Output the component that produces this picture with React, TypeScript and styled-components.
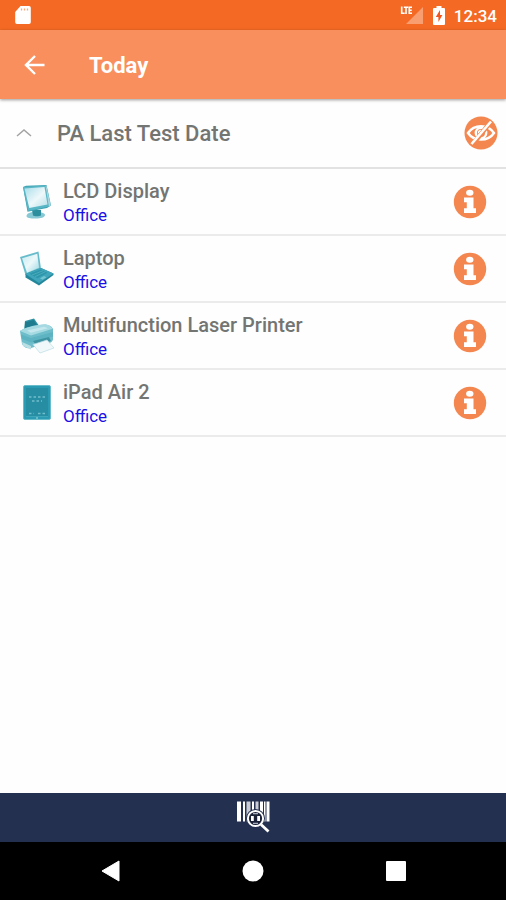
import React from "react";
import styled, { createGlobalStyle } from "styled-components";

const GlobalStyle = createGlobalStyle`
  *, *::before, *::after { box-sizing: border-box; }
  html, body { margin: 0; padding: 0; background: #fff; }
  body { font-family: Roboto, "Liberation Sans", sans-serif; }
  svg { display: block; flex: none; }
`;

const Screen = styled.div`
  display: flex;
  flex-direction: column;
  min-height: 100vh;
  background: #fefefe;
`;

const StatusBar = styled.div`
  display: flex;
  align-items: center;
  justify-content: space-between;
  height: 30px;
  padding: 0 9px 0 14px;
  background: #f46a24;
  color: #fff;
`;

const StatusGroup = styled.div`
  display: flex;
  align-items: center;
  gap: 9px;
`;

const Clock = styled.time`
  font-size: 17px;
  line-height: 20px;
  font-weight: 500;
  padding-top: 2px;
`;

const AppBar = styled.header`
  display: flex;
  align-items: center;
  gap: 31px;
  height: 69px;
  padding: 0 12px;
  background: #f88f5d;
  color: #fff;
  box-shadow: 0 1px 3px rgba(0, 0, 0, 0.4);
  z-index: 1;
`;

const IconButton = styled.button<{ $size: number }>`
  display: flex;
  align-items: center;
  justify-content: center;
  flex: none;
  width: ${(p) => p.$size}px;
  height: ${(p) => p.$size}px;
  padding: 0;
  border: 0;
  background: transparent;
  color: inherit;
  cursor: pointer;
`;

const Title = styled.h1`
  margin: 0;
  padding-top: 2px;
  font-size: 22px;
  line-height: 28px;
  font-weight: 700;
`;

const GroupHeader = styled.div`
  display: flex;
  align-items: center;
  justify-content: space-between;
  height: 70px;
  padding: 0 8px;
  border-bottom: 2px solid #e2e2e2;
`;

const GroupToggle = styled.button`
  display: flex;
  align-items: center;
  gap: 25px;
  padding: 2px 0 0 8px;
  border: 0;
  background: transparent;
  color: #737573;
  font-family: inherit;
  font-size: 22px;
  line-height: 28px;
  font-weight: 500;
  cursor: pointer;
`;

const List = styled.ul`
  flex: 1;
  margin: 0;
  padding: 0;
  list-style: none;
`;

const Row = styled.li`
  display: flex;
  align-items: center;
  gap: 8px;
  height: 67px;
  padding: 0 19px;
  border-bottom: 2px solid #ebebeb;
`;

const RowText = styled.div`
  flex: 1;
  min-width: 0;
  padding-top: 2px;
`;

const Name = styled.div`
  color: #737573;
  font-size: 20px;
  line-height: 24px;
  font-weight: 500;
`;

const Location = styled.a`
  display: block;
  color: #1a0fe6;
  font-size: 17px;
  line-height: 24px;
  text-decoration: none;
`;

const ScanBar = styled.div`
  display: flex;
  align-items: center;
  justify-content: center;
  height: 49px;
  background: #24304f;
`;

const NavBar = styled.nav`
  display: flex;
  align-items: center;
  justify-content: center;
  gap: 111px;
  height: 58px;
  background: #000;
  color: #fff;
`;

const SdCardIcon = () => (
  <svg width="18" height="20" viewBox="0 0 18 20" aria-hidden="true">
    <path d="M6.500 1H15a1.800 1.800 0 0 1 1.800 1.800v14.400A1.800 1.800 0 0 1 15 19H3a1.800 1.800 0 0 1-1.800-1.800V7z" fill="#fff" />
    <path d="M7.500 3.500v2M10.500 3.500v2M13.500 3.500v2" stroke="#f9a77c" strokeWidth="1.300" />
  </svg>
);

const SignalIcon = () => (
  <svg width="24" height="20" viewBox="0 0 24 20" role="img" aria-label="LTE signal">
    <path d="M23 2v17H6z" fill="#fff" opacity="0.350" />
    <g fill="none" stroke="#fff" strokeWidth="1.600">
      <path d="M1.700 1.500v6.800h3M3.800 2.200h4.400M6 2.200v6.700M12 2.200H9.300v6h2.700M9.300 5.200h2.400" />
    </g>
  </svg>
);

const BatteryIcon = () => (
  <svg width="12" height="19" viewBox="0 0 12 19" role="img" aria-label="Charging">
    <path d="M3.500 0h5v2H11a1 1 0 0 1 1 1v15a1 1 0 0 1-1 1H1a1 1 0 0 1-1-1V3a1 1 0 0 1 1-1h2.500z" fill="#fff" />
    <path d="M7 4 2.800 11H5.400v5L9.400 9H7z" fill="#f0561e" />
  </svg>
);

const ArrowIcon = () => (
  <svg width="22" height="22" viewBox="0 0 22 22" aria-hidden="true">
    <path d="M20.500 11H2M11 2 2 11l9 9" fill="none" stroke="#fff" strokeWidth="2.400" />
  </svg>
);

const ChevronIcon = () => (
  <svg width="16" height="10" viewBox="0 0 16 10" aria-hidden="true">
    <path d="M1 7 8 1 15 7" fill="none" stroke="#a3a3a3" strokeWidth="1.500" />
  </svg>
);

const HiddenIcon = () => (
  <svg width="34" height="34" viewBox="0 0 34 34" aria-hidden="true">
    <circle cx="17" cy="17" r="16.500" fill="#f4874f" />
    <g fill="none" stroke="#fff" strokeWidth="2.400">
      <path d="M4 17c3-4.400 7.600-6.800 13-6.800S27 12.600 30 17c-3 4.400-7.600 6.600-13 6.600S7 21.400 4 17z" />
      <circle cx="17" cy="17" r="5.200" />
      <path d="M14.500 17.500a2.800 2.800 0 0 1 2.500-3" strokeWidth="1.300" />
    </g>
    <path d="M9 28 27.500 5" stroke="#f4874f" strokeWidth="4.500" />
    <path d="M7.500 28 27 5.500" stroke="#fff" strokeWidth="2.600" />
  </svg>
);

const InfoIcon = () => (
  <svg width="34" height="34" viewBox="0 0 34 34" aria-hidden="true">
    <circle cx="17" cy="17" r="16.200" fill="#f4874f" />
    <ellipse cx="16.800" cy="7.700" rx="3.700" ry="3" fill="#fff" />
    <path d="M11 12.500h9.500v10.800h2.500V28H11v-4.700h2.800v-6H11z" fill="#fff" />
  </svg>
);

const DisplayIcon = () => (
  <svg width="36" height="38" viewBox="0 0 36 38" aria-hidden="true">
    <defs>
      <linearGradient id="displayGlass" x1="0" y1="0" x2="1" y2="1">
        <stop offset="0" stopColor="#a8deea" />
        <stop offset="0.550" stopColor="#eef8fa" />
        <stop offset="1" stopColor="#b5dfe8" />
      </linearGradient>
    </defs>
    <path d="M7.500 33c0-2.500 4-4.300 9-4.300 5.500 0 9.500 1.300 9.500 3.300 0 2.400-4.500 3.500-9.500 3.500s-9-.5-9-2.500z" fill="#86c8d3" />
    <path d="M13 27h9v5.500c-2 1-6.500 1-8 0z" fill="#2d8e9e" />
    <path d="m4 4 3-1.200L27.500 2l4.500 20.500-4 2.600-19.500 3.700z" fill="#3ea3b3" />
    <path d="m4 4 22.500-1.400 3.300 21L9 28z" fill="#58b6c5" />
    <path d="m5.500 5.500 20-1.500 3 17.500L10.300 25z" fill="url(#displayGlass)" />
    <path d="m27.300 2.500 4.500 20-2 1.200-3.300-21z" fill="#a9d7df" />
  </svg>
);

const LaptopIcon = () => (
  <svg width="36" height="38" viewBox="0 0 36 38" aria-hidden="true">
    <defs>
      <linearGradient id="laptopGlass" x1="0" y1="0" x2="1" y2="1">
        <stop offset="0" stopColor="#c3eaf1" />
        <stop offset="0.500" stopColor="#ecf8fa" />
        <stop offset="1" stopColor="#9dd7e3" />
      </linearGradient>
    </defs>
    <path d="M1 7 19.500 1.500l2.500 17L6.500 25z" fill="#67bccb" />
    <path d="m3 8.300 15.300-4.500 1.700 14-12 5z" fill="url(#laptopGlass)" />
    <path d="m6.500 24 15.500-6 12.500 5.500V25L20 35.500l-13.500-8z" fill="#24869a" />
    <path d="m6.500 24 15.500-6 12.500 5.500L20 33z" fill="#3fa5ba" />
    <path d="m10.500 23.700 11-4.200 7 3.200-10 5.500z" fill="#2d96ab" />
    <path d="m13 25 11-4.300M16 26.700l10.500-5" stroke="#52b0bf" strokeWidth="0.800" />
    <path d="m21 28.300 4-2.300 2.500 1.300-4 2.400z" fill="#75c4d1" />
  </svg>
);

const PrinterIcon = () => (
  <svg width="36" height="38" viewBox="0 0 36 38" aria-hidden="true">
    <path d="M5 13 6 4 15 1.500l4.500 6.500-1 5z" fill="#2e91a2" />
    <path d="m6 5.500 8.500-2.500 4 6L6 12.500z" fill="#1f7c8f" />
    <path d="M1 14c4-3 13-5.500 24-6.500 5 0 9 2.500 9 5v10c-1 4-5 4-9 4.500L12 31c-5 1-7-1-9-4z" fill="#6ebdca" />
    <path d="M1 14C6 10.500 15 8 25 7.500c5 0 8 2 8 4.500L12 18.500z" fill="#a6dae2" />
    <path d="M8 13.500 25 9.800l4 1.400-17 4.600z" fill="#c5e8ee" />
    <path d="M2 17.500 12 21l22-6v4.500l-22 6L3 22z" fill="#5db3c1" />
    <path d="m14 24 16-4 2 4-15 4z" fill="#3f94a4" />
    <path d="m14 27.500 14-4.500 7 8-14 5z" fill="#f0f8fa" stroke="#bbdde4" strokeWidth="0.700" />
    <path d="m3 25 9 4v3.500L4 29z" fill="#b9dfe5" />
  </svg>
);

const TabletIcon = () => (
  <svg width="36" height="38" viewBox="0 0 36 38" aria-hidden="true">
    <rect x="4.500" y="1.500" width="27" height="34" rx="1.500" fill="#2a9bb2" stroke="#69bdcb" />
    <rect x="7" y="4" width="22" height="28" fill="#268da3" />
    <path d="M10 13h16M13 17h10M10 29.500h5M19 29.500h7" stroke="#70bdcb" strokeWidth="1.500" strokeDasharray="2.500 2" />
    <path d="M7 32.500h22" stroke="#3ea6b8" />
    <circle cx="18" cy="34" r="0.800" fill="#b9e2e9" />
  </svg>
);

const BarcodeIcon = () => (
  <svg width="36" height="36" viewBox="0 0 36 36" aria-hidden="true">
    <g fill="#fff">
      <path d="M2 1.500h4v20H2zM8 1.500h2v20H8zM17 1.500h2v20h-2zM25 1.500h3v20h-3zM29 1.500h1.500v20H29zM31.500 1.500h3v20h-3z" />
      <path d="M11.500 1.500h4v20h-4zM20.500 1.500h3v20h-3z" opacity="0.750" />
    </g>
    <circle cx="20.500" cy="18.500" r="9.500" fill="#24304f" />
    <circle cx="20.500" cy="18.500" r="7.600" fill="#1b2238" stroke="#fff" strokeWidth="2" />
    <path d="M16 16h2.800v5H16zM22.200 16H25v5h-2.800z" fill="#fff" />
    <path d="M18 13.700h5M18 23.300h5" stroke="#a9afbd" strokeWidth="1.200" />
    <path d="m26 24.500 7.500 7" stroke="#fff" strokeWidth="2.800" />
  </svg>
);

const BackIcon = () => (
  <svg width="20" height="22" viewBox="0 0 20 22" aria-hidden="true">
    <path d="M19 1v20L2 11z" fill="#fff" stroke="#fff" strokeLinejoin="round" />
  </svg>
);

const HomeIcon = () => (
  <svg width="22" height="22" viewBox="0 0 22 22" aria-hidden="true">
    <circle cx="11" cy="11" r="10.500" fill="#fff" />
  </svg>
);

const RecentIcon = () => (
  <svg width="20" height="20" viewBox="0 0 20 20" aria-hidden="true">
    <rect width="20" height="20" rx="1" fill="#fff" />
  </svg>
);

const items = [
  { name: "LCD Display", location: "Office", Icon: DisplayIcon },
  { name: "Laptop", location: "Office", Icon: LaptopIcon },
  { name: "Multifunction Laser Printer", location: "Office", Icon: PrinterIcon },
  { name: "iPad Air 2", location: "Office", Icon: TabletIcon },
];

export default function App() {
  return (
    <>
      <GlobalStyle />
      <Screen>
        <StatusBar>
          <SdCardIcon />
          <StatusGroup>
            <SignalIcon />
            <BatteryIcon />
            <Clock>12:34</Clock>
          </StatusGroup>
        </StatusBar>
        <AppBar>
          <IconButton $size={46} aria-label="Back">
            <ArrowIcon />
          </IconButton>
          <Title>Today</Title>
        </AppBar>
        <GroupHeader>
          <GroupToggle aria-expanded="true">
            <ChevronIcon />
            PA Last Test Date
          </GroupToggle>
          <IconButton $size={34} aria-label="Hide completed">
            <HiddenIcon />
          </IconButton>
        </GroupHeader>
        <List>
          {items.map(({ name, location, Icon }) => (
            <Row key={name}>
              <Icon />
              <RowText>
                <Name>{name}</Name>
                <Location href="#office">{location}</Location>
              </RowText>
              <IconButton $size={34} aria-label={`Details of ${name}`}>
                <InfoIcon />
              </IconButton>
            </Row>
          ))}
        </List>
        <ScanBar>
          <IconButton $size={48} aria-label="Scan barcode">
            <BarcodeIcon />
          </IconButton>
        </ScanBar>
        <NavBar>
          <IconButton $size={32} aria-label="System back">
            <BackIcon />
          </IconButton>
          <IconButton $size={32} aria-label="Home">
            <HomeIcon />
          </IconButton>
          <IconButton $size={32} aria-label="Recent apps">
            <RecentIcon />
          </IconButton>
        </NavBar>
      </Screen>
    </>
  );
}
